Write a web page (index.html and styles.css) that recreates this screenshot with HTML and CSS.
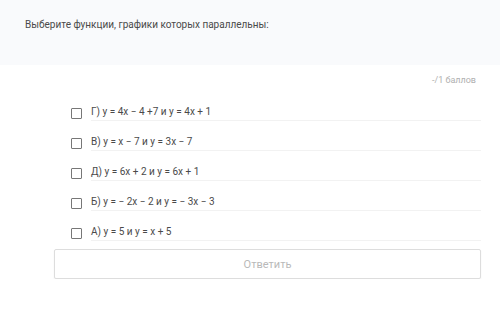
FILE: index.html
```html
<!DOCTYPE html>
<html lang="ru">
<head>
    <meta charset="UTF-8">
    <title>Вопрос</title>
    <link rel="stylesheet" href="styles.css">
</head>
<body>
    <div class="question-head">
        <p class="question-text">Выберите функции, графики которых параллельны:</p>
    </div>

    <div class="question-body">
        <div class="score">-/1 баллов</div>

        <ul class="answers">
            <li class="answer"><span class="check"></span><span class="answer-text">Г) у = 4х − 4 +7 и у = 4х + 1</span></li>
            <li class="answer"><span class="check"></span><span class="answer-text">В) у = х − 7 и у = 3х − 7</span></li>
            <li class="answer"><span class="check"></span><span class="answer-text">Д) у = 6х + 2 и у = 6х + 1</span></li>
            <li class="answer"><span class="check"></span><span class="answer-text">Б) у = − 2х − 2 и у = − 3х − 3</span></li>
            <li class="answer"><span class="check"></span><span class="answer-text">А) у = 5 и у = х + 5</span></li>
        </ul>

        <button type="button" class="submit-btn">Ответить</button>
    </div>
</body>
</html>
```

FILE: styles.css
```css
body {
    margin: 0;
    font-family: Roboto, "Liberation Sans", sans-serif;
    background-color: #fff;
    color: #444;
}

.question-head {
    background-color: #f9fafc;
    height: 65px;
    padding: 18px 25px 0;
    box-sizing: border-box;
}

.question-text {
    margin: 0;
    font-size: 10px;
    line-height: 13px;
    color: #4a4a4a;
}

.question-body {
    padding: 9px 19px 0 54px;
}

.score {
    text-align: right;
    font-size: 9px;
    line-height: 12px;
    color: #b0b0b0;
    padding-right: 5px;
}

.answers {
    list-style: none;
    margin: 5px 0 0;
    padding: 0 0 0 17px;
}

.answer {
    display: flex;
    align-items: flex-start;
}

.check {
    flex: none;
    width: 9px;
    height: 9px;
    border: 1px solid #777;
    border-radius: 1px;
    margin-top: 17px;
    margin-right: 9px;
}

.answer-text {
    flex: 1;
    padding: 14px 0 1px;
    line-height: 14px;
    font-size: 10px;
    color: #4a4a4a;
    border-bottom: 1px solid #f2f2f2;
}

.submit-btn {
    display: block;
    width: 100%;
    height: 30px;
    margin-top: 8px;
    background-color: #fff;
    border: 1px solid #ddd;
    border-radius: 2px;
    font-family: Roboto, "Liberation Sans", sans-serif;
    font-size: 11px;
    color: #b9b9b9;
    box-shadow: 0 1px 2px rgba(0, 0, 0, 0.06);
}
```
